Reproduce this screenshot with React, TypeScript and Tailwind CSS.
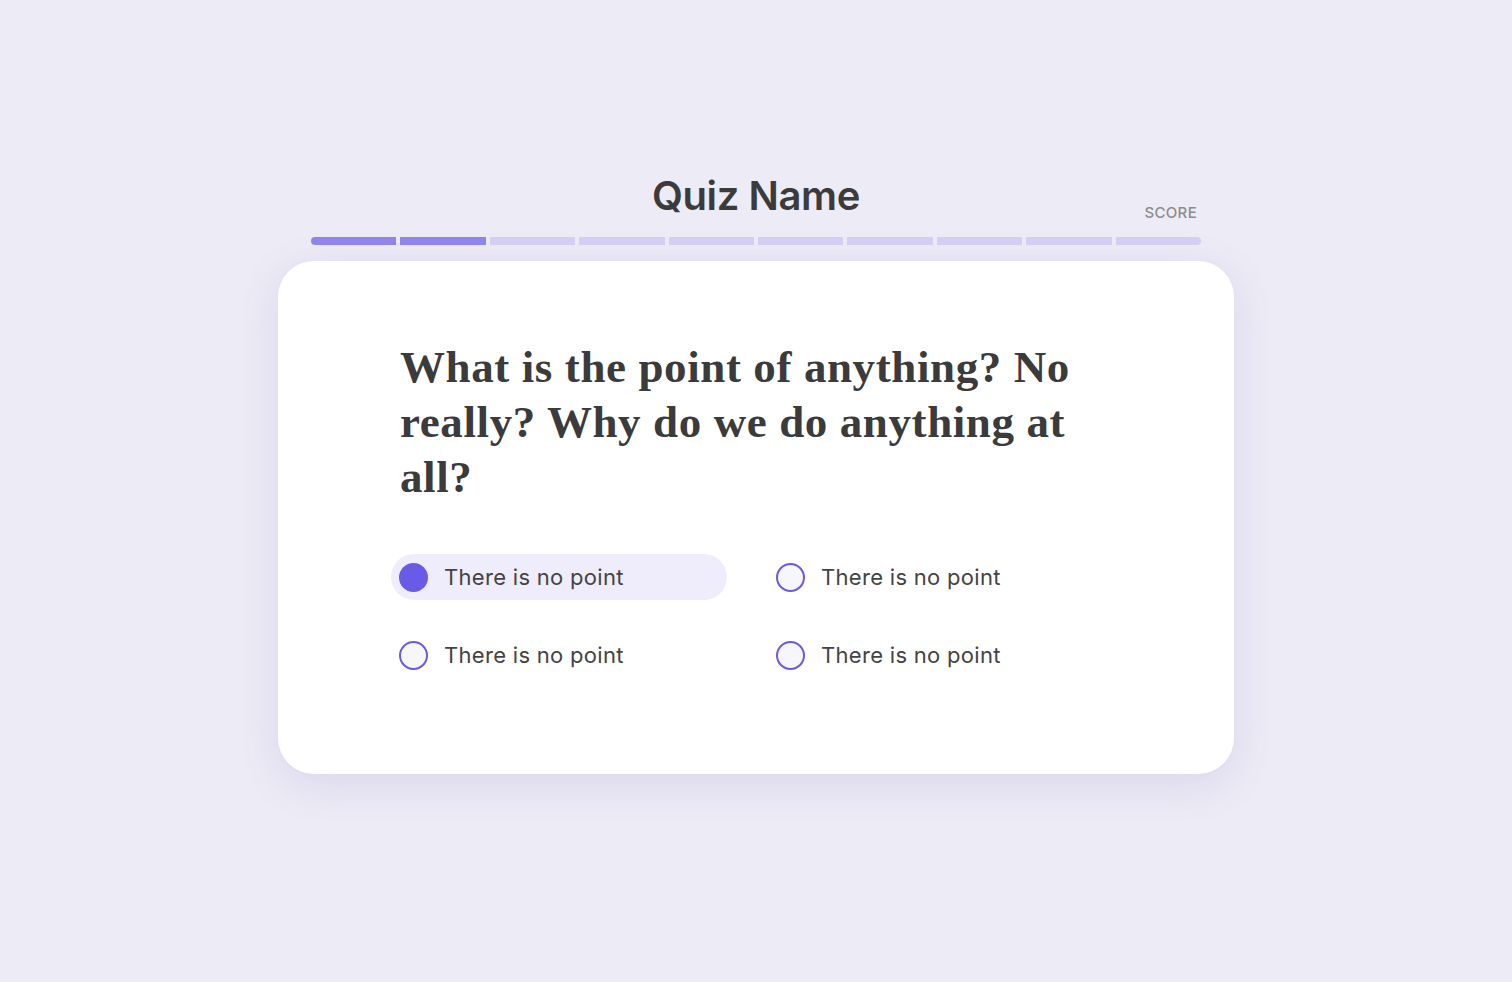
const options = [
  { label: "There is no point", selected: true },
  { label: "There is no point", selected: false },
  { label: "There is no point", selected: false },
  { label: "There is no point", selected: false },
];

const steps = Array.from({ length: 10 }, (_, i) => i < 2);

export default function App() {
  return (
    <div className="min-h-screen w-full bg-[#edebf5] font-['Inter',sans-serif] text-[#3d3d3d]">
      <div className="mx-auto w-[956px] pt-[171px]">
        {/* Header */}
        <div className="px-[33px]">
          <div className="grid grid-cols-[1fr_auto_1fr] items-end">
            <div />
            <h1 className="text-[40px] leading-[50px] font-semibold tracking-[-0.01em] text-[#3b3b3b]">
              Quiz Name
            </h1>
            <div className="flex justify-end pr-[4px] mb-[-1px]">
              <span className="text-[15px] leading-[18px] font-medium uppercase tracking-[0.02em] text-[#8c8c8c]">
                Score
              </span>
            </div>
          </div>

          <div className="mt-[16px] flex gap-[4px]">
            {steps.map((done, i) => (
              <div
                key={i}
                className={`h-[8px] flex-1 ${done ? "bg-[#9085eb]" : "bg-[#d3cef2]"} ${
                  i === 0 ? "rounded-l-full" : ""
                } ${i === steps.length - 1 ? "rounded-r-full" : ""}`}
              />
            ))}
          </div>
        </div>

        {/* Card */}
        <div className="mt-[16px] h-[513px] rounded-[36px] bg-white pl-[122px] pt-[79px] shadow-[0_10px_40px_rgba(120,105,210,0.16)]">
          <h2 className="font-['Liberation_Serif',serif] text-[45px] leading-[55px] font-bold tracking-[0.6px] text-[#3b3b3b]">
            What is the point of anything? No
            <br />
            really? Why do we do anything at
            <br />
            all?
          </h2>

          <div className="mt-[49px] -ml-[9px] grid grid-cols-[336px_336px] gap-x-[41px] gap-y-[32px]">
            {options.map((opt, i) => (
              <div
                key={i}
                className={`flex h-[46px] items-center gap-[16px] rounded-full px-[8px] ${
                  opt.selected ? "bg-[#efecfb]" : ""
                }`}
              >
                <span
                  className={`h-[29px] w-[29px] shrink-0 rounded-full ${
                    opt.selected
                      ? "bg-[#6a5ae8]"
                      : "border-2 border-[#6a5ae8] bg-[#f7f6fd]"
                  }`}
                />
                <span className="text-[22px] leading-[28px] tracking-[0.3px] text-[#444444]">
                  {opt.label}
                </span>
              </div>
            ))}
          </div>
        </div>
      </div>
    </div>
  );
}
